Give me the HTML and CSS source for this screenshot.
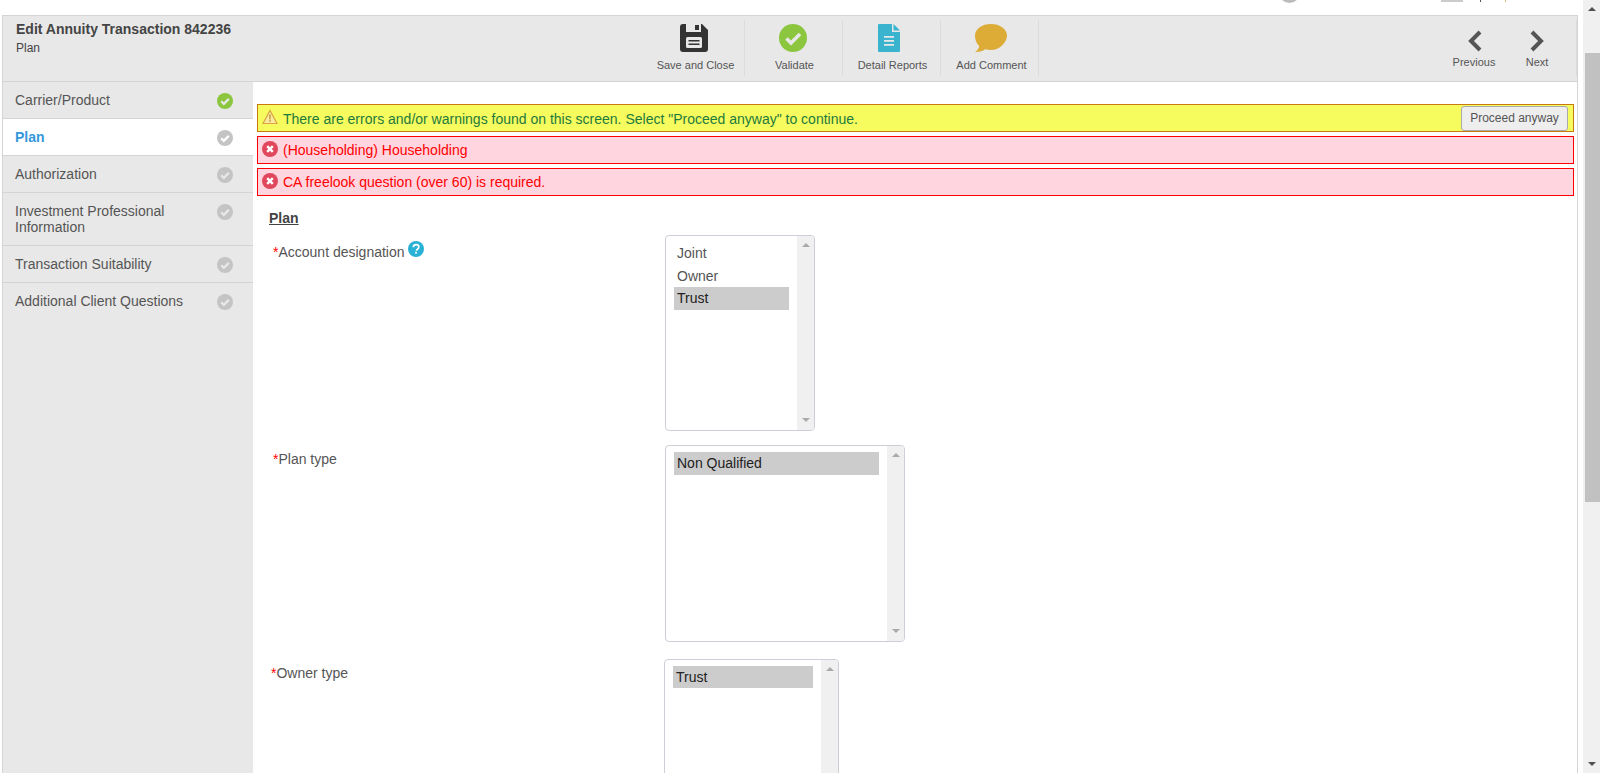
FILE: index.html
```html
<!DOCTYPE html>
<html>
<head><title>Edit Annuity Transaction</title>
<meta name="viewport" content="width=device-width, initial-scale=1.0">
<link rel="stylesheet" href="styles.css">
</head>
<body>
<div class="page">
	<div class="topstrip">
		<span class="top-circle"></span>
		<span class="top-box"></span>
		<span class="top-tick"></span>
		<span class="top-tick top-tick-tan"></span>
	</div>
	<div class="app">
		<div class="header">
			<div class="heading">
				<div class="heading-title">Edit Annuity Transaction 842236</div>
				<div class="heading-sub">Plan</div>
			</div>
			<div class="toolbar">
				<div class="tool tool-save">
					<svg width="28" height="28" viewBox="0 0 28 28"><path fill="#333" d="M3 0h3v8h15V0h1l6 6v19a3 3 0 0 1-3 3H3a3 3 0 0 1-3-3V3a3 3 0 0 1 3-3z"/><path fill="#333" d="M15 1h4v5h-4z"/><rect x="6" y="13" width="16" height="11" rx="1.5" fill="#e8e8e8"/><path fill="#333" d="M8.500 16h11v1.500h-11zM8.500 19.500h11v1.500h-11z"/></svg>
					<span>Save and Close</span>
				</div>
				<div class="tool tool-validate">
					<svg width="28" height="28" viewBox="0 0 28 28"><circle cx="14" cy="14" r="14" fill="#8cc63f"/><path d="M7.500 14.500l4.500 4.500 9-9" fill="none" stroke="#e8e8e8" stroke-width="3.600"/></svg>
					<span>Validate</span>
				</div>
				<div class="tool tool-reports">
					<svg width="22" height="28" viewBox="0 0 22 28"><path fill="#3ab3cf" d="M1 0h13v8h8v19a1 1 0 0 1-1 1H1a1 1 0 0 1-1-1V1a1 1 0 0 1 1-1z"/><path fill="#3ab3cf" d="M15.500 0l6.500 6.500h-6.500z"/><path fill="#e8e8e8" d="M6 12h10v1.800H6zM6 16h10v1.800H6zM6 20h10v1.800H6z"/></svg>
					<span>Detail Reports</span>
				</div>
				<div class="tool tool-comment">
					<svg width="32" height="28" viewBox="0 0 32 28"><path fill="#dcac36" d="M16 0c8.800 0 16 4.900 16 11.500S24.800 26 16 26c-2 0-4-.3-5.800-.8C8.500 26.800 5 28 0 28c2.500-1.500 3.800-3.500 4.200-6C1.500 19.700 0 15.800 0 11.500 0 4.900 7.200 0 16 0z"/></svg>
					<span>Add Comment</span>
				</div>
			</div>
			<div class="pager">
				<div class="pager-btn pager-prev">
					<svg width="14" height="22" viewBox="0 0 14 22"><path d="M12 2L3 11l9 9" fill="none" stroke="#555" stroke-width="4"/></svg>
					<span>Previous</span>
				</div>
				<div class="pager-btn pager-next">
					<svg width="14" height="22" viewBox="0 0 14 22"><path d="M2 2l9 9-9 9" fill="none" stroke="#555" stroke-width="4"/></svg>
					<span>Next</span>
				</div>
			</div>
		</div>
		<div class="main">
			<div class="sidebar">
				<div class="step"><span>Carrier/Product</span><svg class="check" viewBox="0 0 16 16"><circle cx="8" cy="8" r="8" fill="#8cc63f"/><path d="M4.200 8.300l2.600 2.600 5-5" fill="none" stroke="#e8e8e8" stroke-width="2.200"/></svg></div>
				<div class="step step-active"><span>Plan</span><svg class="check" viewBox="0 0 16 16"><circle cx="8" cy="8" r="8" fill="#c4c4c4"/><path d="M4.200 8.300l2.600 2.600 5-5" fill="none" stroke="#fff" stroke-width="2.200"/></svg></div>
				<div class="step"><span>Authorization</span><svg class="check" viewBox="0 0 16 16"><circle cx="8" cy="8" r="8" fill="#c4c4c4"/><path d="M4.200 8.300l2.600 2.600 5-5" fill="none" stroke="#e8e8e8" stroke-width="2.200"/></svg></div>
				<div class="step step-tall"><span>Investment Professional Information</span><svg class="check" viewBox="0 0 16 16"><circle cx="8" cy="8" r="8" fill="#c4c4c4"/><path d="M4.200 8.300l2.600 2.600 5-5" fill="none" stroke="#e8e8e8" stroke-width="2.200"/></svg></div>
				<div class="step"><span>Transaction Suitability</span><svg class="check" viewBox="0 0 16 16"><circle cx="8" cy="8" r="8" fill="#c4c4c4"/><path d="M4.200 8.300l2.600 2.600 5-5" fill="none" stroke="#e8e8e8" stroke-width="2.200"/></svg></div>
				<div class="step step-last"><span>Additional Client Questions</span><svg class="check" viewBox="0 0 16 16"><circle cx="8" cy="8" r="8" fill="#c4c4c4"/><path d="M4.200 8.300l2.600 2.600 5-5" fill="none" stroke="#e8e8e8" stroke-width="2.200"/></svg></div>
			</div>
			<div class="content">
				<div class="alert alert-warn">
					<svg class="alert-icon" viewBox="0 0 16 16"><path d="M8 1.500L15 14.500H1z" fill="#fbe9a0" stroke="#d9a441" stroke-width="1.200"/><path d="M7.300 5.500h1.400l-.2 5h-1zM7.300 11.300h1.400v1.400H7.300z" fill="#b8862b"/></svg>
					<span class="alert-text">There are errors and/or warnings found on this screen. Select "Proceed anyway" to continue.</span>
					<button class="proceed">Proceed anyway</button>
				</div>
				<div class="alert alert-error">
					<svg class="alert-icon" viewBox="0 0 16 16"><circle cx="8" cy="8" r="8" fill="#e0475c"/><path d="M5.200 5.200l5.600 5.600M10.800 5.200l-5.600 5.600" stroke="#fff" stroke-width="2.400"/></svg>
					<span class="alert-text">(Householding) Householding</span>
				</div>
				<div class="alert alert-error">
					<svg class="alert-icon" viewBox="0 0 16 16"><circle cx="8" cy="8" r="8" fill="#e0475c"/><path d="M5.200 5.200l5.600 5.600M10.800 5.200l-5.600 5.600" stroke="#fff" stroke-width="2.400"/></svg>
					<span class="alert-text">CA freelook question (over 60) is required.</span>
				</div>
				<div class="section-title">Plan</div>
				<div class="field field-designation">
					<div class="field-label"><span class="req">*</span>Account designation<svg class="help" viewBox="0 0 16 16"><circle cx="8" cy="8" r="8" fill="#29b2d6"/><path d="M5.300 6.200C5.400 4.600 6.500 3.700 8.100 3.700c1.600 0 2.700 1 2.700 2.300 0 1.100-.6 1.700-1.400 2.200-.7.500-.9.800-.9 1.500" fill="none" stroke="#fff" stroke-width="1.700"/><rect x="7.100" y="10.800" width="1.800" height="1.800" fill="#fff"/></svg></div>
					<div class="listbox listbox-designation">
						<div class="options">
							<div class="option">Joint</div>
							<div class="option">Owner</div>
							<div class="option option-selected">Trust</div>
						</div>
						<div class="list-scroll"><span class="arrow-up"></span><span class="arrow-down"></span></div>
					</div>
				</div>
				<div class="field field-plan">
					<div class="field-label"><span class="req">*</span>Plan type</div>
					<div class="listbox listbox-plan">
						<div class="options">
							<div class="option option-selected">Non Qualified</div>
						</div>
						<div class="list-scroll"><span class="arrow-up"></span><span class="arrow-down"></span></div>
					</div>
				</div>
				<div class="field field-owner">
					<div class="field-label"><span class="req">*</span>Owner type</div>
					<div class="listbox listbox-owner">
						<div class="options">
							<div class="option option-selected">Trust</div>
						</div>
						<div class="list-scroll"><span class="arrow-up"></span><span class="arrow-down"></span></div>
					</div>
				</div>
			</div>
		</div>
	</div>
</div>
<div class="pagescroll">
	<span class="page-arrow-up"></span>
	<div class="page-thumb"></div>
	<span class="page-arrow-down"></span>
</div>
</body>
</html>
```
FILE: styles.css
```css
html, body {margin: 0; height: 100%; overflow: hidden}
body
{
	display: flex;
	background: #fff;
	font-family: "Liberation Sans", Arial, sans-serif;
	font-size: 14px;
	color: #555;
}
.page
{
	flex: 1;
	height: 773px;
	overflow: hidden;
	padding-left: 2px;
}
.topstrip
{
	height: 15px;
	width: 1576px;
	display: flex;
	overflow: hidden;
}
.top-circle
{
	width: 21px;
	height: 21px;
	margin: -18px 0 0 1277px;
	border: 3px solid #bbb;
	border-radius: 50%;
	box-sizing: border-box;
}
.top-box
{
	width: 22px;
	height: 2px;
	margin-left: 141px;
	background: #ccc;
}
.top-tick
{
	width: 1px;
	height: 2px;
	margin-left: 17px;
	background: #555;
}
.top-tick-tan {margin-left: 24px; background: #d8b878}
.app
{
	width: 1576px;
	border: 1px solid #d4d4d4;
	border-width: 1px 1px 0 1px;
	box-sizing: border-box;
}
.header
{
	display: flex;
	height: 65px;
	background: #e8e8e8;
	border-bottom: 1px solid #d4d4d4;
}
.heading
{
	width: 644px;
	padding: 5px 0 0 13px;
	box-sizing: border-box;
}
.heading-title
{
	font-size: 14px;
	line-height: 17px;
	font-weight: bold;
	color: #444;
}
.heading-sub
{
	margin-top: 3px;
	font-size: 12px;
	line-height: 15px;
	color: #444;
}
.toolbar
{
	display: flex;
	margin-top: 4px;
	height: 56px;
}
.tool
{
	width: 98px;
	display: flex;
	flex-direction: column;
	align-items: center;
	padding-top: 4px;
	box-sizing: border-box;
	border-right: 1px solid #dcdcdc;
}
.tool span
{
	margin-top: 6px;
	font-size: 11px;
	line-height: 14px;
	white-space: nowrap;
}
.tool-save svg {margin-left: -4px}
.tool-validate svg {margin-left: -2px}
.tool-validate span {margin-left: 2px}
.tool-reports svg {margin-left: -6px}
.tool-reports span {margin-left: 2px}
.tool-comment svg {margin-left: 2px}
.tool-comment span {margin-left: 4px}
.pager
{
	display: flex;
	margin: 4px 0 0 auto;
	height: 56px;
	padding-right: 8px;
	border-right: 1px solid #dcdcdc;
}
.pager-btn
{
	width: 62px;
	display: flex;
	flex-direction: column;
	align-items: center;
	padding-top: 10px;
	box-sizing: border-box;
}
.pager-btn span
{
	margin-top: 3px;
	font-size: 11px;
	line-height: 14px;
}
.pager-prev span {margin-right: 2px}
.main
{
	display: flex;
	height: 692px;
}
.sidebar
{
	width: 250px;
	flex-shrink: 0;
	background: #e8e8e8;
}
.step
{
	display: flex;
	align-items: flex-start;
	justify-content: space-between;
	padding: 10px 20px 0 12px;
	height: 26px;
	border-bottom: 1px solid #d4d4d4;
	line-height: 16px;
}
.step span {width: 190px}
.step-active {background: #fff}
.step-active span {color: #3498db; font-weight: bold}
.step-tall {height: 42px}
.step-last {border-bottom: 0}
.check {width: 16px; height: 16px; margin-top: 1px; flex-shrink: 0}
.content
{
	flex: 1;
	padding: 22px 3px 0 4px;
	background: #fff;
	min-width: 0;
}
.alert
{
	display: flex;
	align-items: center;
	height: 28px;
	box-sizing: border-box;
	margin-bottom: 4px;
	padding: 0 5px 0 4px;
	border: 1px solid #f00;
	background: #ffd5e0;
	color: #f00;
}
.alert-warn
{
	background: #f6fb5e;
	border-color: #c87a10;
	color: #1e7a3c;
}
.alert-warn .alert-text {padding-top: 2px}
.alert-icon
{
	width: 16px;
	height: 16px;
	margin: -2px 5px 0 0;
	flex-shrink: 0;
}
.proceed
{
	margin-left: auto;
	width: 107px;
	height: 25px;
	padding: 0;
	border: 1px solid #aaa;
	border-radius: 3px;
	background: #eee;
	color: #555;
	font-family: inherit;
	font-size: 12px;
}
.section-title
{
	margin: 14px 0 0 12px;
	font-weight: bold;
	font-size: 14px;
	line-height: 16px;
	color: #444;
	text-decoration: underline;
}
.field
{
	display: flex;
	align-items: flex-start;
}
.field-label
{
	line-height: 18px;
	display: flex;
	align-items: flex-start;
	box-sizing: border-box;
}
.field-designation {margin-top: 9px}
.field-designation .field-label {width: 408px; padding: 8px 0 0 16px}
.field-plan {margin-top: 14px}
.field-plan .field-label {width: 408px; padding: 5px 0 0 16px}
.field-owner {margin-top: 17px}
.field-owner .field-label {width: 407px; padding: 5px 0 0 14px}
.req {color: #f00}
.help {width: 16px; height: 16px; margin: -2px 0 0 3px}
.listbox
{
	display: flex;
	box-sizing: border-box;
	border: 1px solid #ccd0d6;
	border-radius: 4px;
	background: #fff;
	overflow: hidden;
}
.listbox-designation {width: 150px; height: 196px}
.listbox-plan {width: 240px; height: 197px}
.listbox-owner {width: 175px; height: 197px}
.options
{
	flex: 1;
	padding: 6px 8px 0 8px;
	min-width: 0;
}
.option
{
	height: 23px;
	padding-left: 3px;
	line-height: 22px;
}
.option-selected {background: #ccc; color: #222}
.listbox-designation .option-selected {margin-top: -1px}
.listbox-owner .option-selected {height: 22px}
.list-scroll
{
	width: 17px;
	flex-shrink: 0;
	background: #f0f0f0;
	display: flex;
	flex-direction: column;
	justify-content: space-between;
	align-items: center;
	padding: 7px 0 8px;
	box-sizing: border-box;
}
.arrow-up, .arrow-down, .page-arrow-up, .page-arrow-down
{
	width: 0;
	height: 0;
	border-left: 4px solid transparent;
	border-right: 4px solid transparent;
}
.arrow-up {border-bottom: 4px solid #aaa}
.arrow-down {border-top: 4px solid #aaa}
.pagescroll
{
	width: 17px;
	height: 773px;
	flex-shrink: 0;
	background: #f0f0f0;
	display: flex;
	flex-direction: column;
	align-items: center;
}
.page-arrow-up {margin-top: 7px; border-bottom: 4px solid #505050}
.page-arrow-down {margin-top: auto; margin-bottom: 7px; border-top: 4px solid #505050}
.page-thumb
{
	width: 15px;
	height: 449px;
	margin-top: 42px;
	margin-left: 2px;
	background: #c1c1c1;
}
```
